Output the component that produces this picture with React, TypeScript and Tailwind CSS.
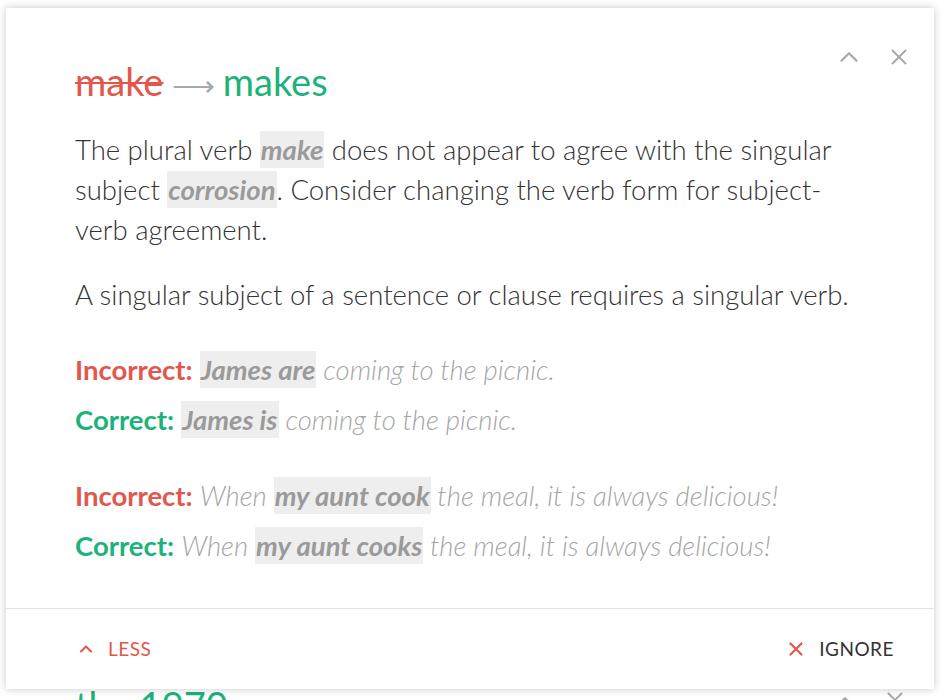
import { ChevronUp, X } from 'lucide-react';

const red = 'text-[#e2574c]';
const green = 'text-[#1db27a]';

function Hl({ children }: { children: React.ReactNode }) {
  return (
    <span className="bg-[#eeeeee] py-[2px] px-[1px] font-bold italic text-[#9a9a9a]">{children}</span>
  );
}

function ExampleLine({ ok, children }: { ok: boolean; children: React.ReactNode }) {
  return (
    <p className="leading-[40px]">
      <span className={`font-bold not-italic ${ok ? green : red}`}>{ok ? 'Correct:' : 'Incorrect:'}</span>{' '}
      <span className="italic font-light text-[#a6a6a6]">{children}</span>
    </p>
  );
}

export default function App() {
  return (
    <div
      className="w-[944px] h-[700px] overflow-hidden bg-white pt-2 px-[6px]"
      style={{ fontFamily: 'Lato, "Open Sans", sans-serif' }}
    >
      <div className="relative z-10 w-[928px] h-[681px] bg-white shadow-[0_0_8px_rgba(0,0,0,0.22)] flex flex-col">
        <div className="absolute top-[34px] right-[22px] flex items-center gap-[22px] text-[#a9a9a9]">
          <ChevronUp size={30} strokeWidth={1.8} />
          <X size={26} strokeWidth={1.8} />
        </div>

        <div className="flex-1 pl-[69px] pr-[60px] pt-[52px] text-[#333333]">
          <h2 className="text-[38px] leading-[42px] font-normal">
            <span className={`${red} line-through decoration-[2px]`}>make</span>
            <span className="text-[#a9a9a9] text-[30px] font-light"> ⟶ </span>
            <span className={green}>makes</span>
          </h2>

          <p className="mt-[25px] text-[27.5px] leading-[40px] font-light">
            The plural verb <Hl>make</Hl> does not appear to agree with the singular subject <Hl>corrosion</Hl>. Consider
            changing the verb form for subject-verb agreement.
          </p>

          <p className="mt-[25px] text-[27.5px] leading-[40px] font-light">
            A singular subject of a sentence or clause requires a singular verb.
          </p>

          <div className="mt-[35px] text-[27.5px] flex flex-col gap-[10px]">
            <ExampleLine ok={false}>
              <Hl>James are</Hl> coming to the picnic.
            </ExampleLine>
            <ExampleLine ok>
              <Hl>James is</Hl> coming to the picnic.
            </ExampleLine>
          </div>

          <div className="mt-[36px] text-[27.5px] flex flex-col gap-[10px]">
            <ExampleLine ok={false}>
              When <Hl>my aunt cook</Hl> the meal, it is always delicious!
            </ExampleLine>
            <ExampleLine ok>
              When <Hl>my aunt cooks</Hl> the meal, it is always delicious!
            </ExampleLine>
          </div>
        </div>

        <div className="h-[81px] border-t border-[#e3e3e3] flex items-center justify-between pl-[70px] pr-[40px] text-[19px] tracking-[0.5px]">
          <button className={`flex items-center gap-[12px] ${red}`}>
            <ChevronUp size={20} strokeWidth={2.4} />
            <span className="uppercase">Less</span>
          </button>
          <button className="flex items-center gap-[12px] text-[#333333]">
            <X size={22} strokeWidth={2.4} className="text-[#e2574c]" />
            <span className="uppercase">Ignore</span>
          </button>
        </div>
      </div>

      <div className="flex items-start justify-between pl-[69px] pr-[30px] -mt-[4px]">
        <span className={`text-[38px] leading-[40px] ${green}`}>the 1970s</span>
        <div className="flex gap-[22px] text-[#a9a9a9] mt-[2px]">
          <ChevronUp size={30} strokeWidth={1.8} />
          <X size={26} strokeWidth={1.8} />
        </div>
      </div>
    </div>
  );
}
